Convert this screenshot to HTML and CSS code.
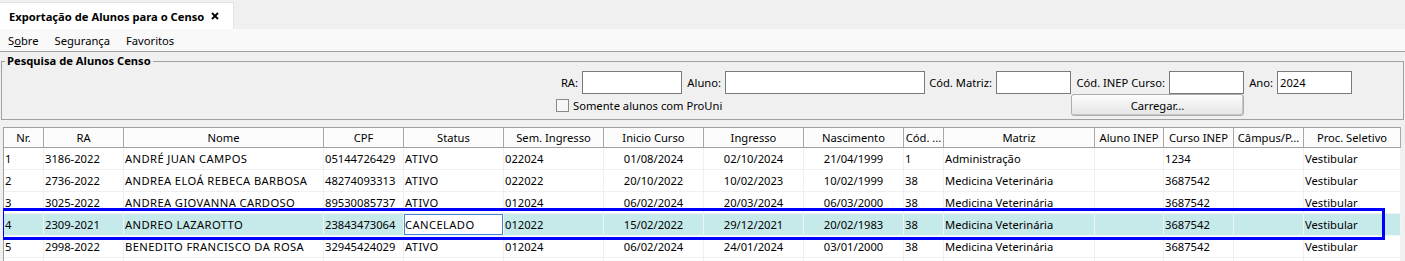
FILE: index.html
```html
<!DOCTYPE html>
<html lang="pt-BR">
<head>
  <meta charset="UTF-8">
  <title>Exportação de Alunos para o Censo</title>
  <link rel="stylesheet" href="styles.css">
</head>
<body>

<div class="tabbar">
  <div class="tab">
    <span>Exportação de Alunos para o Censo</span>
    <svg class="close" width="8" height="8" viewBox="0 0 8 8"><path d="M1 1L7 7M7 1L1 7" stroke="#000" stroke-width="1.8"/></svg>
  </div>
</div>

<div class="menubar">
  <span class="menu">S<u>o</u>bre</span>
  <span class="menu">Segurança</span>
  <span class="menu">Favoritos</span>
</div>

<div class="panel">
  <fieldset class="group">
    <legend>Pesquisa de Alunos Censo</legend>
    <div class="filters">
      <label class="lbl">RA:</label><input class="field" type="text">
      <label class="lbl">Aluno:</label><input class="field" type="text">
      <label class="lbl">Cód. Matriz:</label><input class="field" type="text">
      <label class="lbl">Cód. INEP Curso:</label><input class="field" type="text">
      <label class="lbl">Ano:</label><input class="field" type="text" value="2024">

      <label class="check"><span class="box"></span>Somente alunos com ProUni</label>
      <button class="btn">Carregar...</button>
    </div>
  </fieldset>

  <div class="grid-wrap">
    <table class="grid">
      <colgroup>
        <col class="w40"><col class="w80"><col class="w200"><col class="w80"><col class="w100">
        <col class="w100"><col class="w100"><col class="w100"><col class="w100"><col class="w40">
        <col class="w151"><col class="w69"><col class="w70"><col class="w70"><col class="w97">
      </colgroup>
      <thead>
        <tr>
          <th>Nr.</th><th>RA</th><th>Nome</th><th>CPF</th><th>Status</th>
          <th>Sem. Ingresso</th><th>Inicio Curso</th><th>Ingresso</th><th>Nascimento</th><th>Cód. ...</th>
          <th>Matriz</th><th>Aluno INEP</th><th>Curso INEP</th><th>Câmpus/P...</th><th>Proc. Seletivo</th>
        </tr>
      </thead>
      <tbody>
        <tr>
          <td>1</td><td>3186-2022</td><td class="up">ANDRÉ JUAN CAMPOS</td><td>05144726429</td><td class="up">ATIVO</td>
          <td>022024</td><td class="c">01/08/2024</td><td class="c">02/10/2024</td><td class="c">21/04/1999</td><td>1</td>
          <td>Administração</td><td></td><td>1234</td><td></td><td>Vestibular</td>
        </tr>
        <tr>
          <td>2</td><td>2736-2022</td><td class="up">ANDREA ELOÁ REBECA BARBOSA</td><td>48274093313</td><td class="up">ATIVO</td>
          <td>022022</td><td class="c">20/10/2022</td><td class="c">10/02/2023</td><td class="c">10/02/1999</td><td>38</td>
          <td>Medicina Veterinária</td><td></td><td>3687542</td><td></td><td>Vestibular</td>
        </tr>
        <tr>
          <td>3</td><td>3025-2022</td><td class="up">ANDREA GIOVANNA CARDOSO</td><td>89530085737</td><td class="up">ATIVO</td>
          <td>012024</td><td class="c">06/02/2024</td><td class="c">20/03/2024</td><td class="c">06/03/2000</td><td>38</td>
          <td>Medicina Veterinária</td><td></td><td>3687542</td><td></td><td>Vestibular</td>
        </tr>
        <tr class="selected">
          <td>4</td><td>2309-2021</td><td class="up">ANDREO LAZAROTTO</td><td>23843473064</td><td class="up focus">CANCELADO</td>
          <td>012022</td><td class="c">15/02/2022</td><td class="c">29/12/2021</td><td class="c">20/02/1983</td><td>38</td>
          <td>Medicina Veterinária</td><td></td><td>3687542</td><td></td><td>Vestibular</td>
        </tr>
        <tr>
          <td>5</td><td>2998-2022</td><td class="up">BENEDITO FRANCISCO DA ROSA</td><td>32945424029</td><td class="up">ATIVO</td>
          <td>012024</td><td class="c">06/02/2024</td><td class="c">24/01/2024</td><td class="c">03/01/2000</td><td>38</td>
          <td>Medicina Veterinária</td><td></td><td>3687542</td><td></td><td>Vestibular</td>
        </tr>
        <tr>
          <td></td><td></td><td></td><td></td><td></td><td></td><td></td><td></td>
          <td></td><td></td><td></td><td></td><td></td><td></td><td></td>
        </tr>
      </tbody>
    </table>
    <!-- marcação azul sobre a linha selecionada -->
    <div class="mark"></div>
  </div>
</div>

</body>
</html>
```

FILE: styles.css
```css
body {
  margin: 0;
  font-family: "Noto Sans", sans-serif;
  font-size: 11.2px;
  color: #000;
  background-color: #f0f0f0;
  overflow: hidden;
}

.tabbar {
  height: 29px;
  padding-top: 2px;
  box-sizing: border-box;
  background: #f0f0f0;
}

.tab {
  width: 234px;
  height: 27px;
  box-sizing: border-box;
  display: flex;
  align-items: center;
  gap: 7px;
  padding-left: 9px;
  background: #fff;
  border-top: 1px solid #e3e3e3;
  border-right: 1px solid #e3e3e3;
  font-weight: bold;
  white-space: nowrap;
}

.menubar {
  height: 23px;
  box-sizing: border-box;
  display: flex;
  align-items: center;
  gap: 16px;
  padding: 1px 0 0 8px;
  background: #f9f9f9;
  border-bottom: 1px solid #a0a0a0;
}

.panel {
  background: #f0f0f0;
}

.group {
  margin: 1px 1px 0 1px;
  padding: 0 0 3px 0;
  min-width: 0;
  border: 1px solid #a0a0a0;
}

.group legend {
  margin-left: 3px;
  padding: 0 2px;
  line-height: 16px;
  font-weight: bold;
}

.filters {
  display: grid;
  grid-template-columns: 22px 100px 35px 200px 63px 75px 90px 75px 25px 75px;
  grid-template-rows: 23px 22px;
  column-gap: 4px;
  margin: 2px 0 0 554px;
}

.lbl {
  text-align: right;
  align-self: center;
  white-space: nowrap;
}

.field {
  height: 23px;
  box-sizing: border-box;
  margin: 0;
  padding: 0 2px;
  border: 1px solid #7a7a7a;
  font: inherit;
  background: #fff;
}

.check {
  grid-column: 1 / 5;
  display: flex;
  align-items: center;
  gap: 4px;
  white-space: nowrap;
}

.box {
  width: 13px;
  height: 13px;
  box-sizing: border-box;
  border: 1px solid #8a8a8a;
  background: #f7f7f7;
}

.btn {
  grid-column: 7 / 9;
  margin-left: -4px;
  height: 22px;
  font: inherit;
  color: #000;
  border: 1px solid #acacac;
  border-radius: 3px;
  background: linear-gradient(#fdfdfd, #e4e4e4);
  box-shadow: inset -1px -1px 0 #c8c8c8;
}

.grid-wrap {
  position: relative;
  height: 134px;
  margin: 7px 0 0 3px;
  overflow: hidden;
}

.grid {
  table-layout: fixed;
  border-collapse: separate;
  border-spacing: 0;
  width: 1398px;
  background: #fff;
  border-top: 1px solid #a0a0a0;
  border-left: 1px solid #a0a0a0;
}

.w40 { width: 40px; }
.w69 { width: 69px; }
.w70 { width: 70px; }
.w80 { width: 80px; }
.w97 { width: 97px; }
.w100 { width: 100px; }
.w151 { width: 151px; }
.w200 { width: 200px; }

th, td {
  box-sizing: border-box;
  padding: 0 1px;
  white-space: nowrap;
  overflow: hidden;
  font-weight: normal;
}

th {
  height: 20px;
  text-align: center;
  background: #fcfcfc;
  border-right: 1px solid #a8a8a8;
  border-bottom: 1px solid #a0a0a0;
}

td {
  height: 22px;
  text-align: left;
  border-right: 1px solid #f0f0f0;
  border-bottom: 1px solid #f0f0f0;
}

td.c {
  text-align: center;
}

td.up {
  letter-spacing: 0.4px;
}

.selected td {
  background: #c6e9e9;
  border-right-color: #eaf7f7;
  border-bottom-color: #eaf7f7;
}

.selected td.focus {
  background: #fff;
  box-shadow: inset 0 0 0 1px #4a84d8;
}

.mark {
  position: absolute;
  left: -2px;
  top: 81px;
  width: 1384px;
  height: 32px;
  box-sizing: border-box;
  border: 3px solid #0000ff;
}
```
